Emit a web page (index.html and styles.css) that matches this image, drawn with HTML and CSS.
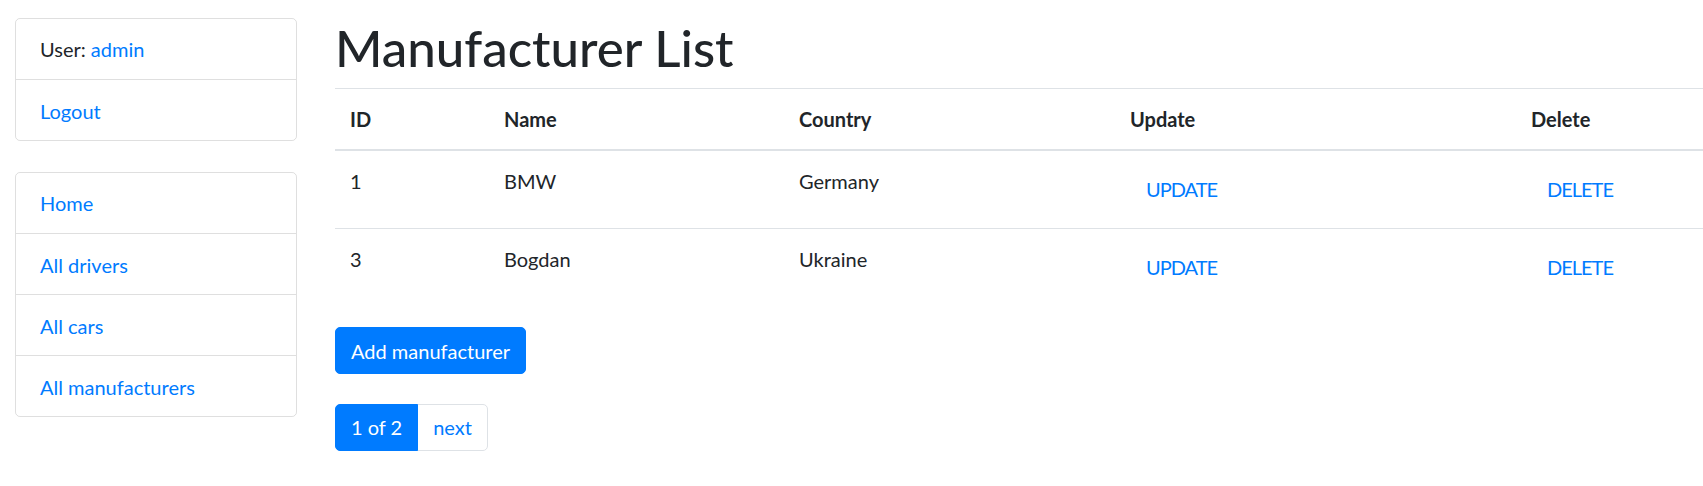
FILE: index.html
```html
<!DOCTYPE html>
<html lang="en">
<head>
<meta charset="utf-8">
<title>Manufacturer List</title>
<link rel="stylesheet" href="styles.css">
</head>
<body>
<div class="page">
  <aside class="sidebar">
    <ul class="list-group">
      <li class="list-item">User: <a href="#">admin</a></li>
      <li class="list-item"><a href="#">Logout</a></li>
    </ul>
    <ul class="list-group nav-group">
      <li class="list-item"><a href="#">Home</a></li>
      <li class="list-item"><a href="#">All drivers</a></li>
      <li class="list-item"><a href="#">All cars</a></li>
      <li class="list-item"><a href="#">All manufacturers</a></li>
    </ul>
  </aside>
  <main class="content">
    <h1 class="title">Manufacturer List</h1>
    <table class="table">
      <colgroup>
        <col class="col-id">
        <col class="col-name">
        <col class="col-country">
        <col class="col-update">
        <col class="col-delete">
      </colgroup>
      <thead>
        <tr><th>ID</th><th>Name</th><th>Country</th><th>Update</th><th>Delete</th></tr>
      </thead>
      <tbody>
        <tr>
          <td>1</td><td>BMW</td><td>Germany</td>
          <td><a class="btn-link" href="#">UPDATE</a></td>
          <td><a class="btn-link" href="#">DELETE</a></td>
        </tr>
        <tr>
          <td>3</td><td>Bogdan</td><td>Ukraine</td>
          <td><a class="btn-link" href="#">UPDATE</a></td>
          <td><a class="btn-link" href="#">DELETE</a></td>
        </tr>
      </tbody>
    </table>
    <div class="actions">
      <a class="btn-primary" href="#">Add manufacturer</a>
    </div>
    <nav class="pager">
      <ul class="pagination">
        <li class="page-item active"><span class="page-link">1 of 2</span></li>
        <li class="page-item"><a class="page-link" href="#">next</a></li>
      </ul>
    </nav>
  </main>
</div>
</body>
</html>
```
FILE: styles.css
```css
* { box-sizing: border-box; }
html, body { margin: 0; padding: 0; }
body {
  font-family: "Lato", "Liberation Sans", sans-serif;
  font-size: 20px;
  line-height: 30px;
  color: #212529;
  background: #fff;
  overflow: hidden;
}
a { color: #007bff; text-decoration: none; }

.page {
  display: flex;
  align-items: flex-start;
  width: 1703px;
  padding: 18px 0 0 15px;
  gap: 38px;
}

.sidebar { width: 282px; flex: 0 0 282px; }

.list-group {
  list-style: none;
  margin: 0;
  padding: 0;
  border: 1px solid rgba(0,0,0,.125);
  border-radius: 5px;
}
.nav-group { margin-top: 31px; }
.list-item {
  padding: 15px 24px;
  height: 61px;
  border-top: 1px solid rgba(0,0,0,.125);
}
.list-item:first-child { border-top: 0; height: 60px; }
.list-item + .list-item { padding-top: 16px; }

.content { flex: 1; min-width: 0; }

.title {
  margin: 0 0 10px;
  font-size: 51px;
  line-height: 60px;
  font-weight: 500;
  color: #212529;
}

.table {
  width: 100%;
  border-collapse: collapse;
  table-layout: fixed;
  margin-bottom: 21px;
}
.col-id { width: 154px; }
.col-name { width: 295px; }
.col-country { width: 331px; }
.col-update { width: 401px; }
.col-delete { width: auto; }

.table th, .table td {
  padding: 15px;
  text-align: left;
  vertical-align: top;
  border-top: 1px solid #dee2e6;
  line-height: 30px;
}
.table th { font-weight: 700; vertical-align: bottom; }
.table thead th { border-bottom: 2px solid #dee2e6; }

.btn-link {
  display: inline-block;
  padding: 7px 15px 8px;
  border: 1px solid transparent;
  line-height: 30px;
  font-weight: 400;
  letter-spacing: -1px;
}

.actions { display: flex; }
.btn-primary {
  display: inline-block;
  padding: 7.5px 15px;
  border: 1px solid #007bff;
  border-radius: 5px;
  background: #007bff;
  color: #fff;
  line-height: 30px;
}

.pager { margin-top: 30px; display: flex; }
.pagination {
  display: flex;
  list-style: none;
  margin: 0;
  padding: 0;
}
.page-link {
  display: block;
  padding: 10px 15px;
  line-height: 25px;
  border: 1px solid #dee2e6;
  color: #007bff;
  background: #fff;
}
.page-item + .page-item .page-link { margin-left: -1px; }
.page-item:first-child .page-link { border-radius: 5px 0 0 5px; }
.page-item:last-child .page-link { border-radius: 0 5px 5px 0; }
.page-item.active .page-link {
  background: #007bff;
  border-color: #007bff;
  color: #fff;
  position: relative;
  z-index: 1;
}
```
